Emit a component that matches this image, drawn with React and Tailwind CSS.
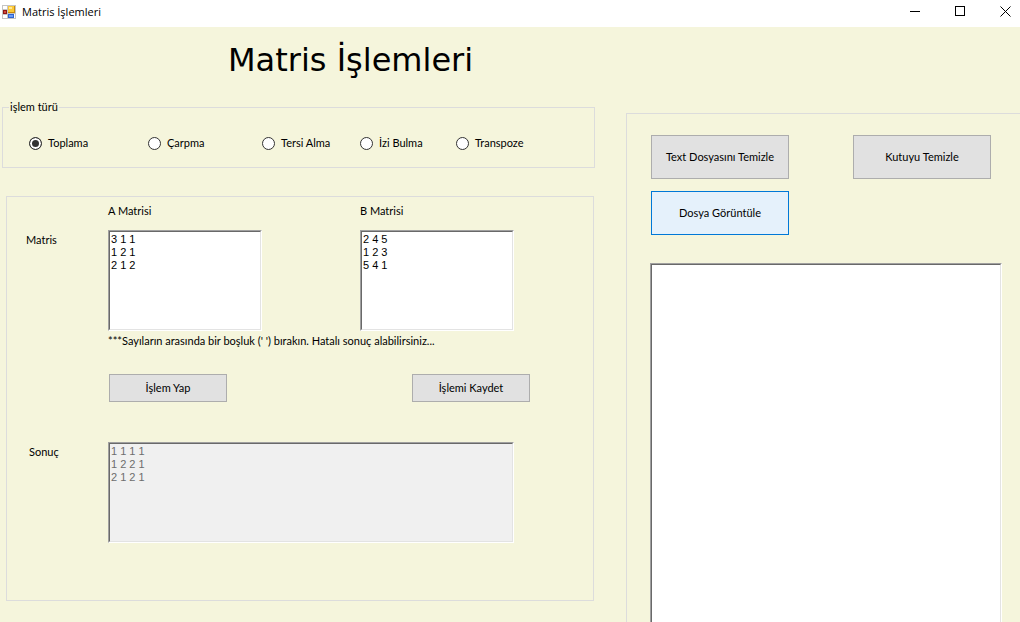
import { useState } from "react";

const OPERATIONS = ["Toplama", "Çarpma", "Tersi Alma", "İzi Bulma", "Transpoze"];

function WindowIcon() {
  return (
    <svg className="size-[14px] shrink-0" viewBox="0 0 14 14" shapeRendering="crispEdges" aria-hidden="true">
      <rect width="14" height="14" fill="#c4c4c4" />
      <rect x="1" y="1" width="4" height="3" fill="#fff" />
      <rect x="1" y="10" width="4" height="3" fill="#fff" />
      <rect x="12" y="9" width="1" height="4" fill="#fff" />
      <rect x="1" y="5" width="4" height="4" fill="#8f1414" />
      <rect x="2" y="6" width="2" height="2" fill="#d04a3a" />
      <rect x="6" y="1" width="7" height="7" fill="#c98a0c" />
      <rect x="6" y="1" width="6" height="6" fill="#fbc938" />
      <rect x="7" y="2" width="3" height="2" fill="#ffe79a" />
      <rect x="6" y="9" width="6" height="4" fill="#2f62cf" />
      <rect x="7" y="10" width="4" height="2" fill="#6b9cf5" />
    </svg>
  );
}

function TitleBar() {
  return (
    <header className="flex h-[27px] items-center bg-white pb-1 pl-0.5 text-black">
      <WindowIcon />
      <span className="ml-1.5 flex-1 font-['Open_Sans',sans-serif] text-[11px] leading-4">Matris İşlemleri</span>
      <div className="flex h-[22px] items-center">
        <button type="button" aria-label="Simge durumuna küçült" className="flex w-[45px] justify-center">
          <svg className="size-[11px]" viewBox="0 0 11 11" shapeRendering="crispEdges">
            <path d="M0 5.500h10" stroke="#000" />
          </svg>
        </button>
        <button type="button" aria-label="Ekranı kapla" className="flex w-[45px] justify-center">
          <svg className="size-[11px]" viewBox="0 0 11 11" shapeRendering="crispEdges">
            <rect x="0.500" y="0.500" width="9" height="9" fill="none" stroke="#000" />
          </svg>
        </button>
        <button type="button" aria-label="Kapat" className="-mr-2 flex w-[45px] justify-center">
          <svg className="size-[11px]" viewBox="0 0 11 11">
            <path d="M0.500 0.500l10 10M10.500 0.500l-10 10" stroke="#000" />
          </svg>
        </button>
      </div>
    </header>
  );
}

function SunkenBox({ className = "", boxClassName = "", ...props }) {
  return (
    <div className={"flex border border-t-[#a0a0a0] border-r-white border-b-white border-l-[#a0a0a0] " + boxClassName}>
      <textarea
        className={
          "block w-full flex-1 resize-none border border-t-[#696969] border-r-[#e3e3e3] border-b-[#e3e3e3] border-l-[#696969] px-px py-px font-['Liberation_Sans',Arial,sans-serif] leading-[13px] outline-none " +
          className
        }
        {...props}
      />
    </div>
  );
}

function PushButton({ className = "", children }) {
  return (
    <button type="button" className={"border border-[#adadad] bg-[#e1e1e1] text-center " + className}>
      {children}
    </button>
  );
}

export default function App() {
  const [operation, setOperation] = useState("Toplama");
  const [a, setA] = useState("3 1 1\n1 2 1\n2 1 2");
  const [b, setB] = useState("2 4 5\n1 2 3\n5 4 1");
  const [log, setLog] = useState("");

  return (
    <div className="flex min-h-screen flex-col overflow-x-hidden bg-[#f5f5dc] font-[Lato,Arial,sans-serif] text-[11px] leading-[14px] text-black">
      <TitleBar />
      <main className="grid flex-1 grid-cols-[593fr_394fr] gap-x-[31px] pl-0.5">
        <div className="pb-[21px]">
          <h1 className="pt-3 pl-[226px] font-['DejaVu_Sans',Verdana,sans-serif] text-[32px] leading-[42px] whitespace-nowrap">
            Matris İşlemleri
          </h1>

          <fieldset className="mt-[19px] h-[68px] border border-[#dcdcdc] pl-[26px]">
            <legend className="-ml-5 px-px">işlem türü</legend>
            <div className="grid grid-cols-[119fr_114fr_98fr_96fr_138fr] pt-[22px]">
              {OPERATIONS.map((name) => (
                <label key={name} className="flex items-center gap-1.5 whitespace-nowrap">
                  <input
                    type="radio"
                    name="operation"
                    checked={operation === name}
                    onChange={() => setOperation(name)}
                    className="size-[13px] appearance-none rounded-full border border-[#333] bg-white checked:bg-[#333] checked:shadow-[inset_0_0_0_2px_#fff]"
                  />
                  {name}
                </label>
              ))}
            </div>
          </fieldset>

          <section className="mt-7 mr-px ml-1 h-[405px] border border-[#dcdcdc] pt-[7px] pl-[19px]">
            <div className="grid grid-cols-[82px_154px_154px] gap-y-3">
              <label htmlFor="a" className="col-start-2">A Matrisi</label>
              <label htmlFor="b" className="col-start-3 ml-[98px] whitespace-nowrap">B Matrisi</label>
              <span className="pt-[3px]">Matris</span>
              <SunkenBox id="a" value={a} onChange={(e) => setA(e.target.value)} boxClassName="h-[101px]" className="bg-white" />
              <SunkenBox id="b" value={b} onChange={(e) => setB(e.target.value)} boxClassName="ml-[98px] h-[101px] w-[154px]" className="bg-white" />
            </div>
            <p className="mt-[3px] ml-[82px] whitespace-nowrap">
              ***Sayıların arasında bir boşluk (' ') bırakın. Hatalı sonuç alabilirsiniz...
            </p>
            <div className="mt-[26px] ml-[83px] flex gap-[185px]">
              <PushButton className="h-7 w-[118px]">İşlem Yap</PushButton>
              <PushButton className="h-7 w-[118px]">İşlemi Kaydet</PushButton>
            </div>
            <div className="mt-10 grid grid-cols-[82px_406px]">
              <label htmlFor="result" className="pt-[3px] pl-[3px]">Sonuç</label>
              <SunkenBox
                id="result"
                disabled
                value={"1 1 1 1\n1 2 2 1\n2 1 2 1"}
                boxClassName="h-[101px]"
                className="bg-[#f0f0f0] text-[#6d6d6d]"
              />
            </div>
          </section>
        </div>

        <section className="mt-[86px] flex flex-col border-t border-l border-[#dcdcdc] pt-[21px] pr-[18px] pl-[23px]">
          <div className="flex flex-wrap gap-x-16 gap-y-3 pl-px">
            <PushButton className="h-11 w-[138px]">Text Dosyasını Temizle</PushButton>
            <PushButton className="h-11 w-[138px]">Kutuyu Temizle</PushButton>
            <button type="button" className="h-11 w-[138px] border border-[#0078d7] bg-[#e5f1fb]">
              Dosya Görüntüle
            </button>
          </div>
          <SunkenBox
            aria-label="Dosya içeriği"
            value={log}
            onChange={(e) => setLog(e.target.value)}
            boxClassName="mt-7 flex-1 border-b-0"
            className="border-b-0 bg-white"
          />
        </section>
      </main>
    </div>
  );
}
